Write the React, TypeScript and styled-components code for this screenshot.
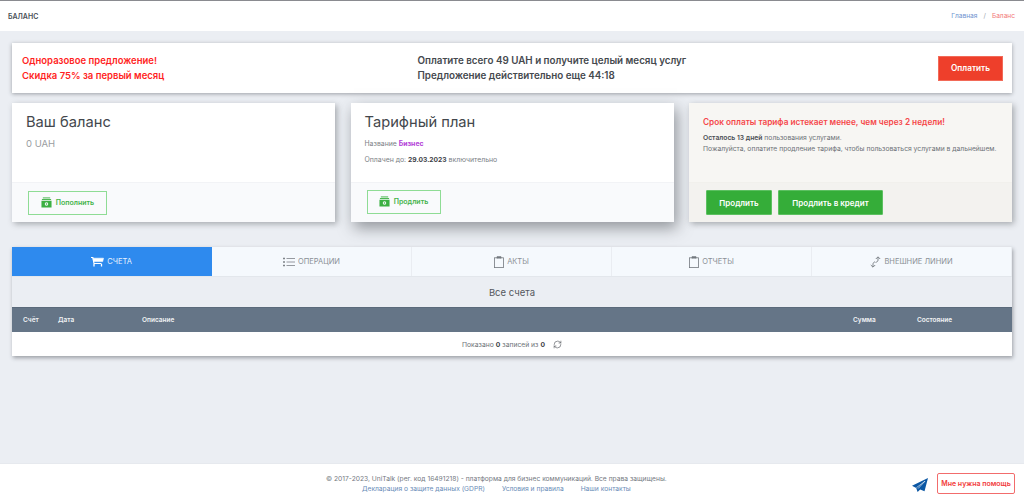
import React from "react";
import styled, { createGlobalStyle } from "styled-components";
import { RefreshCw } from "lucide-react";

const GlobalStyle = createGlobalStyle`
  html, body {
    margin: 0;
    padding: 0;
    background: #ebeef3;
    font-family: "Inter", "Liberation Sans", sans-serif;
    color: #6c757d;
  }
  * { box-sizing: border-box; }
`;

const MoneyIcon = () => (
  <svg width="11" height="11" viewBox="0 0 12 12" fill="#3cb043">
    <rect x="2" y="0.5" width="8" height="1" />
    <rect x="1" y="2.2" width="10" height="1" />
    <path d="M0.5 4h11v7.5h-11z M6 5.8a1.9 1.9 0 1 0 0 3.8a1.9 1.9 0 1 0 0-3.8z" fillRule="evenodd" />
    <circle cx="6" cy="7.7" r="0.8" />
  </svg>
);

const CartIcon = () => (
  <svg width="13" height="11" viewBox="0 0 13 11" fill="none" stroke="#fff">
    <path d="M0 1.5h1.8l1.2 6h7.5" strokeWidth="1.2" />
    <path d="M2 2.2h10.5l-.8 3.4H2.8z" fill="#fff" strokeWidth="0.6" />
    <path d="M3 8v2.5M10.5 8v2.5" strokeWidth="1.3" />
  </svg>
);

const ListIcon = () => (
  <svg width="12" height="10" viewBox="0 0 12 10" fill="none" stroke="#7d8288">
    <path d="M3.5 1.5H12M3.5 5H12M3.5 8.5H12" strokeWidth="0.8" />
    <path d="M0 1.5h2M0 5h2M0 8.5h2" strokeWidth="1.6" />
  </svg>
);

const ClipIcon = () => (
  <svg width="10" height="12" viewBox="0 0 10 12" fill="none" stroke="#74797f" strokeWidth="0.8">
    <rect x="0.5" y="1.8" width="9" height="9.8" />
    <path d="M3 2.4V0.7h4v1.7" fill="#74797f" />
  </svg>
);

const SwapIcon = () => (
  <svg width="11" height="12" viewBox="0 0 11 12" fill="none" stroke="#74797f" strokeWidth="0.9">
    <path d="M8 1v3c0 1.5-1 2-2.5 2.4" />
    <path d="M3 11V8.2c0-1.4.8-2 2-2.4" />
    <path d="M5.8 3L8 .8 10.2 3M.8 9L3 11.2 5.2 9" />
  </svg>
);

const PlaneIcon = () => (
  <svg width="16" height="14" viewBox="0 0 16 14">
    <path d="M16 0L0 7.8l4.2 2.2L5.6 14l2.6-2.6 4.3 1.9z" fill="#0b57a4" />
    <path d="M4.4 9.7L13 3.2 6 10.6" fill="none" stroke="#fff" strokeWidth="0.6" />
  </svg>
);

export default function App() {
  return (
    <>
      <GlobalStyle />
      <Page>
        <Header>
          <PageTitle>БАЛАНС</PageTitle>
          <Breadcrumbs>
            <CrumbLink>Главная</CrumbLink>
            <CrumbSep>/</CrumbSep>
            <CrumbActive>Баланс</CrumbActive>
          </Breadcrumbs>
        </Header>
        <Content>
          <Banner>
            <BannerLeft>
              <div>Одноразовое предложение!</div>
              <div>Скидка 75% за первый месяц</div>
            </BannerLeft>
            <BannerMiddle>
              <div>Оплатите всего 49 UAH и получите целый месяц услуг</div>
              <div>Предложение действительно еще 44:18</div>
            </BannerMiddle>
            <PayButton>Оплатить</PayButton>
          </Banner>
          <Cards>
            <Card>
              <CardBody>
                <CardTitle>Ваш баланс</CardTitle>
                <Balance>0 UAH</Balance>
              </CardBody>
              <CardFooter>
                <OutlineButton $width={79}>
                  <MoneyIcon />
                  Пополнить
                </OutlineButton>
              </CardFooter>
            </Card>
            <Card $deep>
              <CardBody>
                <CardTitle>Тарифный план</CardTitle>
                <PlanLine>
                  Название <PlanName>Бизнес</PlanName>
                </PlanLine>
                <PlanLine>
                  Оплачен до: <strong>29.03.2023</strong> включительно
                </PlanLine>
              </CardBody>
              <CardFooter>
                <OutlineButton $width={74} $raised>
                  <MoneyIcon />
                  Продлить
                </OutlineButton>
              </CardFooter>
            </Card>
            <Card $warm>
              <CardBody>
                <WarnTitle>Срок оплаты тарифа истекает менее, чем через 2 недели!</WarnTitle>
                <WarnText>
                  <strong>Осталось 13 дней</strong> пользования услугами.
                  <br />
                  Пожалуйста, оплатите продление тарифа, чтобы пользоваться услугами в дальнейшем.
                </WarnText>
              </CardBody>
              <CardFooter $warm>
                <GreenButton $width={66}>Продлить</GreenButton>
                <GreenButton $width={105}>Продлить в кредит</GreenButton>
              </CardFooter>
            </Card>
          </Cards>
          <TablePanel>
            <Tabs>
              <Tab $active>
                <CartIcon />
                СЧЕТА
              </Tab>
              <Tab>
                <ListIcon />
                ОПЕРАЦИИ
              </Tab>
              <Tab>
                <ClipIcon />
                АКТЫ
              </Tab>
              <Tab>
                <ClipIcon />
                ОТЧЕТЫ
              </Tab>
              <Tab>
                <SwapIcon />
                ВНЕШНИЕ ЛИНИИ
              </Tab>
            </Tabs>
            <TableTitle>Все счета</TableTitle>
            <TableHead>
              <HeadCell $width={35}>Счёт</HeadCell>
              <HeadCell $width={84}>Дата</HeadCell>
              <HeadCell $grow>Описание</HeadCell>
              <HeadCell $width={64}>Сумма</HeadCell>
              <HeadCell $width={95}>Состояние</HeadCell>
            </TableHead>
            <TableRow>
              Показано <strong>0</strong> записей из <strong>0</strong>
              <RefreshWrap>
                <RefreshCw size={9} strokeWidth={1.6} />
              </RefreshWrap>
            </TableRow>
          </TablePanel>
        </Content>
        <Footer>
          <FooterText>
            <div>© 2017-2023, UniTalk (рег. код 16491218) - платформа для бизнес коммуникаций. Все права защищены.</div>
            <FooterLinks>
              <FooterLink>Декларация о защите данных (GDPR)</FooterLink>
              <FooterLink>Условия и правила</FooterLink>
              <FooterLink>Наши контакты</FooterLink>
            </FooterLinks>
          </FooterText>
          <FooterActions>
            <PlaneWrap>
              <PlaneIcon />
            </PlaneWrap>
            <HelpButton>Мне нужна помощь</HelpButton>
          </FooterActions>
        </Footer>
      </Page>
    </>
  );
}

const Page = styled.div`
  width: 1024px;
  height: 503px;
  display: flex;
  flex-direction: column;
  overflow: hidden;
  border-top: 1px solid #8a8b90;
`;
const Header = styled.div`
  height: 30px;
  flex-shrink: 0;
  background: #fff;
  display: flex;
  align-items: center;
  justify-content: space-between;
  padding: 0 9px 0 8px;
`;
const PageTitle = styled.div`
  font-size: 7px;
  font-weight: 600;
  color: #495057;
`;
const Breadcrumbs = styled.div`
  display: flex;
  align-items: center;
  font-size: 6.6px;
`;
const CrumbLink = styled.span`
  color: #6f93cf;
`;
const CrumbSep = styled.span`
  color: #9aa3ad;
  margin: 0 6px;
`;
const CrumbActive = styled.span`
  color: #f2777a;
`;
const Content = styled.div`
  flex: 1;
  padding: 12px 12px 0;
  display: flex;
  flex-direction: column;
`;
const Banner = styled.div`
  height: 50px;
  background: #fff;
  box-shadow: 0 1px 4px rgba(60, 64, 70, 0.45);
  display: flex;
  align-items: center;
  padding: 0 9px 0 10px;
  font-weight: 600;
  line-height: 15px;
`;
const BannerLeft = styled.div`
  width: 395.5px;
  font-size: 9.5px;
  color: #ff1f24;
`;
const BannerMiddle = styled.div`
  flex: 1;
  font-size: 9.8px;
  color: #45494e;
`;
const PayButton = styled.button`
  width: 65px;
  height: 25px;
  border: 1px solid #f26a58;
  background: #ee3f2b;
  color: #fff;
  font: 600 8.25px "Inter", sans-serif;
  padding: 0;
`;
const Cards = styled.div`
  margin-top: 10px;
  display: grid;
  grid-template-columns: 323px 323px 323px;
  column-gap: 15.5px;
`;
const Card = styled.div<{ $warm?: boolean; $deep?: boolean }>`
  height: 119px;
  background: ${(p) => (p.$warm ? "#f7f6f3" : "#fff")};
  box-shadow: ${(p) =>
    p.$deep ? "3px 6px 14px rgba(60, 64, 70, 0.5)" : "2px 2px 6px rgba(60, 64, 70, 0.4)"};
  display: flex;
  flex-direction: column;
`;
const CardBody = styled.div`
  flex: 1;
  padding: 10px 14px 0 14px;
`;
const CardFooter = styled.div<{ $warm?: boolean }>`
  height: 40px;
  background: ${(p) => (p.$warm ? "#f3f2ef" : "#f9fafc")};
  border-top: 1px solid ${(p) => (p.$warm ? "#f1f0ec" : "#f2f3f6")};
  padding: 8px 17px;
  display: flex;
  align-items: center;
  gap: 6px;
`;
const CardTitle = styled.div`
  font-size: 14.7px;
  font-weight: 400;
  line-height: 18px;
  color: #43474c;
`;
const Balance = styled.div`
  font-size: 9.5px;
  color: #9a9da1;
  margin-top: 7px;
`;
const PlanLine = styled.div`
  font-size: 6.9px;
  color: #7b8085;
  margin-top: 7.5px;
  line-height: 9px;
  strong {
    color: #3d4146;
    font-weight: 700;
    font-size: 6.7px;
  }
`;
const PlanName = styled.span`
  color: #b342d8;
  font-weight: 700;
`;
const WarnTitle = styled.div`
  font-size: 8.25px;
  font-weight: 600;
  color: #f5474a;
  line-height: 10px;
  margin-top: 4px;
`;
const WarnText = styled.div`
  font-size: 6.75px;
  line-height: 10.5px;
  color: #6d7278;
  margin-top: 6px;
  white-space: nowrap;
  strong {
    color: #4a4e53;
    font-weight: 600;
  }
`;
const OutlineButton = styled.button<{ $width: number; $raised?: boolean }>`
  width: ${(p) => p.$width}px;
  height: 24px;
  margin-left: -1px;
  margin-top: ${(p) => (p.$raised ? "-2px" : "0")};
  border: 1px solid #8fdc95;
  background: transparent;
  color: #43b34a;
  font: 600 7px "Inter", sans-serif;
  display: flex;
  align-items: center;
  justify-content: center;
  gap: 4px;
  padding: 0;
`;
const GreenButton = styled.button<{ $width: number }>`
  width: ${(p) => p.$width}px;
  height: 25px;
  border: 1px solid #5cc061;
  border-radius: 1px;
  background: #35ad39;
  color: #fff;
  font: 600 8px "Inter", sans-serif;
  padding: 0;
`;
const TablePanel = styled.div`
  margin-top: 25px;
  background: #ebeef3;
  box-shadow: 1px 2px 4px rgba(60, 64, 70, 0.45);
`;
const Tabs = styled.div`
  display: grid;
  grid-template-columns: repeat(5, 200px);
  height: 30px;
  border-bottom: 1px solid #e3e7ec;
`;
const Tab = styled.div<{ $active?: boolean }>`
  background: ${(p) => (p.$active ? "#2e8aee" : "#f5f9fd")};
  color: ${(p) => (p.$active ? "#e8f2fd" : "#8b9096")};
  border-right: 1px solid ${(p) => (p.$active ? "#2e8aee" : "#eaedf2")};
  display: flex;
  align-items: center;
  justify-content: center;
  gap: 3px;
  font-size: 7.5px;
`;
const TableTitle = styled.div`
  height: 30px;
  display: flex;
  align-items: center;
  justify-content: center;
  font-size: 9.5px;
  color: #54585d;
`;
const TableHead = styled.div`
  height: 25px;
  background: #657587;
  border-top: 1px solid #5b6a7b;
  display: flex;
  align-items: center;
  padding: 0 0 0 11px;
  color: #f1f3f5;
  font-size: 6.5px;
  font-weight: 600;
`;
const HeadCell = styled.div<{ $width?: number; $grow?: boolean }>`
  width: ${(p) => (p.$width ? `${p.$width}px` : "auto")};
  flex: ${(p) => (p.$grow ? 1 : "none")};
`;
const TableRow = styled.div`
  height: 24px;
  background: #fff;
  display: flex;
  align-items: center;
  justify-content: center;
  gap: 2px;
  font-size: 6.75px;
  color: #6d7278;
  strong {
    color: #3d4146;
    font-weight: 700;
  }
`;
const RefreshWrap = styled.span`
  display: flex;
  margin-left: 6px;
  color: #4d5157;
`;
const Footer = styled.div`
  height: 40px;
  flex-shrink: 0;
  background: #fff;
  border-top: 1px solid #e6e9ee;
  display: flex;
  justify-content: space-between;
  padding: 9px 9px 0 326px;
  font-size: 6.7px;
  color: #74797f;
`;
const FooterText = styled.div`
  line-height: 10px;
  padding-top: 1px;
`;
const FooterLinks = styled.div`
  display: flex;
  gap: 17px;
  padding-left: 36px;
`;
const FooterLink = styled.span`
  color: #6a8db8;
`;
const FooterActions = styled.div`
  display: flex;
  align-items: flex-start;
  gap: 9px;
`;
const PlaneWrap = styled.span`
  display: flex;
  margin-top: 5px;
`;
const HelpButton = styled.button`
  width: 78px;
  height: 21px;
  background: #fff;
  border: 1px solid #f26c6c;
  border-radius: 2px;
  color: #f23b3b;
  font: 600 7px "Inter", sans-serif;
  padding: 0;
`;
